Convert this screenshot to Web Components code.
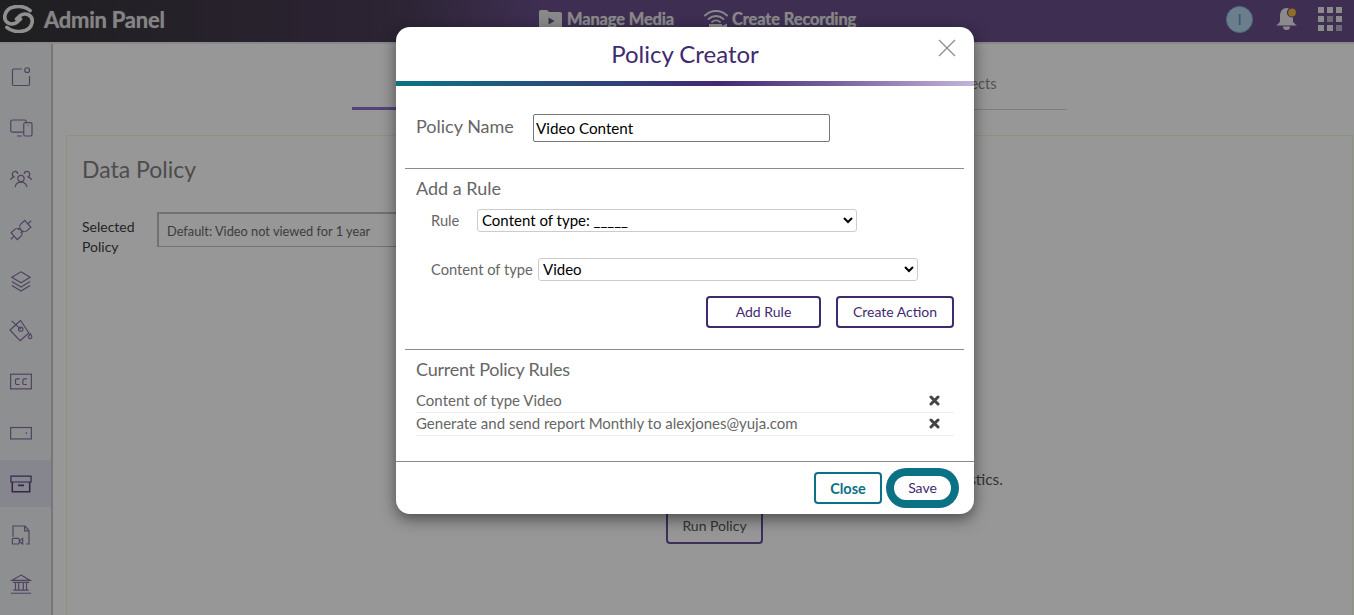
<!DOCTYPE html>
<html lang="en">
<head>
<meta charset="utf-8">
<title>Admin Panel - Policy Creator</title>
<style>
  html, body { margin: 0; height: 100%; overflow: hidden; font-family: Lato, "Liberation Sans", sans-serif; }
</style>
</head>
<body>
<admin-app></admin-app>

<script>
/* shared icons, all drawn on a 24 box */
const NAV_ICONS = [
  '<path d="M13 3.300H4a1.300 1.300 0 0 0-1.300 1.300v15.400a1.300 1.300 0 0 0 1.300 1.300h16a1.300 1.300 0 0 0 1.300-1.300V11"/><circle cx="18.700" cy="4.500" r="2.600"/>',
  '<path d="M14.500 16.400H2.500a1.700 1.700 0 0 1-1.700-1.700V5a1.700 1.700 0 0 1 1.700-1.700h13.500a1.700 1.700 0 0 1 1.700 1.700v1.200M7.600 20.700H13"/><rect x="15" y="6.200" width="9" height="14.500" rx="1.600"/><path d="M19 9h1"/>',
  '<circle cx="12" cy="11.500" r="3.400"/><path d="M5.500 21c.6-3.600 3.200-5.600 6.500-5.600s5.900 2 6.500 5.600"/><path d="M8.500 6.500A3 3 0 1 0 4.500 9.600M.6 13c.7-2 2.400-3.200 4.400-3.400M15.500 6.500a3 3 0 1 1 4 3.100M23.400 13c-.7-2-2.400-3.200-4.400-3.400"/>',
  '<g transform="rotate(-42 12 12)"><path d="M-3 12h5M27 12h-5"/><path d="M2 7h5a5 5 0 0 1 0 10H2zM22 7h-5a5 5 0 0 0 0 10h5z"/><path d="M12 9.800H9.500M12 14.200H9.500"/></g>',
  '<path d="M12 2l10 6-10 6L2 8z"/><path d="M2 12.500l10 6 10-6"/><path d="M2 17l10 6 10-6"/>',
  '<path d="M1.800 1l9.900 9"/><path d="M11.500 .5 20.700 14.200 10.900 22.600 0 10.900z" stroke-linejoin="round"/><circle cx="11.700" cy="10" r="2.300"/><path d="M22.100 15c1 1.500 1.700 2.500 1.700 3.500a1.800 1.800 0 0 1-3.600 0c0-1 .9-2 1.900-3.500z"/>',
  '<rect x=".7" y="3.500" width="22.600" height="16"/><path d="M10.500 8.500H7.500A1.500 1.500 0 0 0 6 10v3.200a1.500 1.500 0 0 0 1.500 1.500h3M18.500 8.500h-3A1.500 1.500 0 0 0 14 10v3.200a1.500 1.500 0 0 0 1.500 1.500h3"/>',
  '<rect x=".7" y="6" width="22.600" height="12.500"/><path d="M17.300 12.200h1.200" stroke-width="2"/>',
  '<path d="M1 3.500h22v6.300H1z"/><path d="M2.500 9.800v10.700h19V9.800M8.700 13.500h6.600" stroke-width="1.700"/>',
  '<path d="M3.300 14V2.200h13.100l4.300 5.100v14.500h-3M16 2.500v5h4.500"/><rect x="2.500" y="15.600" width="7.600" height="6.200" rx="1"/><path d="M10.100 18.700l3.700-3v6.100l-3.700-3"/>',
  '<path d="M12 1.200 22 7H2zM3 9.200h18M3.500 17.500h17M1 21h22"/><path d="M6 9.500v8M9.500 9.500v8M14.500 9.500v8M18 9.500v8"/>'
];

class TopBar extends HTMLElement {
  constructor() {
    super();
    this.attachShadow({ mode: 'open' });
    this.shadowRoot.innerHTML = `
      <style>
        :host {
          display: flex;
          align-items: center;
          box-sizing: content-box;
          height: 38px;
          padding-bottom: 4px;
          border-bottom: 2px solid #e4e4e4;
          background: linear-gradient(90deg, #343336 0, #4b3c57 400px, #674e89 540px, #674e89 100%);
          color: #eaeaea;
        }
        .brand { display: flex; align-items: center; gap: 10px; width: 538px; padding-left: 3px; box-sizing: border-box; }
        .brand b { font-size: 22px; font-weight: 700; letter-spacing: -.25px; color: #dcdcdc; text-shadow: 0 0 1px rgba(220,220,220,.7); }
        .link { display: flex; align-items: center; gap: 4px; font-size: 16.500px; font-weight: 700; letter-spacing: -.15px; margin-right: 30px; color: #e4e4e4; text-shadow: 0 0 1px rgba(228,228,228,.7); }
        .right { display: flex; align-items: center; margin-left: auto; padding-right: 12px; }
        .avatar {
          width: 25px; height: 25px; border-radius: 50%; background: #b4d0e8; border: 1.500px solid #7fb4dc;
          color: #5c92bd; font-size: 15px; text-align: center; line-height: 25px; margin-right: 22px;
        }
        .bell { margin-right: 20px; display: block; }
        .grid { display: grid; grid-template-columns: repeat(3, 6px); gap: 3px; }
        .grid i { width: 6px; height: 6px; background: #e8e8e8; }
        .grid i:nth-child(5), .grid i:nth-child(9) { background: #b7b0c2; }
      </style>
      <div class="brand">
        <svg width="31" height="28" viewBox="0 0 32 30" preserveAspectRatio="none" fill="none" stroke="#f0f0f0" stroke-width="3.800" stroke-linecap="round">
          <path d="M28 6C20-1 4 0 2 11c-1.500 8.500 7 11.500 12.500 7.500l3.500-3.500"/>
          <path d="M28 6C20-1 4 0 2 11c-1.500 8.500 7 11.500 12.500 7.500l3.500-3.500" transform="rotate(180 16 15)"/>
        </svg>
        <b>Admin Panel</b>
      </div>
      <div class="link">
        <svg width="25" height="20" viewBox="0 0 25 20"><path fill="#e4e4e4" d="M1 3a2 2 0 0 1 2-2h6l2 2h11a2 2 0 0 1 2 2v13a2 2 0 0 1-2 2H3a2 2 0 0 1-2-2z"/><path fill="#674e89" d="M10.500 8.500l6 3.500-6 3.500z"/></svg>
        <span>Manage Media</span>
      </div>
      <div class="link" style="margin-right:0">
        <svg width="24" height="23" viewBox="0 0 24 23" fill="none" stroke="#e4e4e4" stroke-width="1.800" stroke-linecap="round"><path d="M1 7.500C7 1.500 17 1.500 23 7.500M4.500 11C9 7 15 7 19.500 11M8 14c2.500-2 5.500-2 8 0"/><path fill="#e4e4e4" stroke="none" d="M5 16h13v7H5zM18 18l5-2.500V23l-5-2z"/></svg>
        <span>Create Recording</span>
      </div>
      <div class="right">
        <div class="avatar">I</div>
        <svg class="bell" width="23" height="24" viewBox="0 0 23 24"><path fill="#e8e4ec" d="M11.500 1c4.500 0 6.500 4 6.500 8v5c0 1.500 2 3 4 4.500H1c2-1.500 4-3 4-4.500V9c0-4 2-8 6.500-8z"/><path fill="#e8e4ec" d="M8 19.500h7a3.500 3.500 0 0 1-7 0z"/><circle cx="17" cy="5.500" r="4.500" fill="#f4b83a" stroke="#674e89" stroke-width="1.200"/></svg>
        <div class="grid"><i></i><i></i><i></i><i></i><i></i><i></i><i></i><i></i><i></i></div>
      </div>
    `;
  }
}

class SideNav extends HTMLElement {
  constructor() {
    super();
    this.attachShadow({ mode: 'open' });
    const active = Number(this.getAttribute('active') || 8);
    const items = NAV_ICONS.map((icon, i) => `
      <div class="item ${i === active ? 'active' : ''}">
        <svg width="22" height="22" viewBox="0 0 24 24" fill="none" stroke="currentColor" stroke-width="1.300">${icon}</svg>
      </div>`).join('');
    this.shadowRoot.innerHTML = `
      <style>
        :host {
          display: block;
          width: 51px;
          flex: none;
          padding-top: 8px;
          background: #edeef2;
          border-right: 2px solid #c6c6c6;
          color: #84709f;
        }
        .item { height: 50.800px; display: flex; align-items: center; padding-left: 10px; }
        .item.active { color: #57407f; position: relative; z-index: 0; }
        .item.active::before { content: ""; position: absolute; inset: 2px 0; background: #dfdfee; z-index: -1; }
        svg { display: block; overflow: visible; }
      </style>
      ${items}
    `;
  }
}

class PageTabs extends HTMLElement {
  constructor() {
    super();
    this.attachShadow({ mode: 'open' });
    this.shadowRoot.innerHTML = `
      <style>
        :host {
          display: flex;
          height: 65px;
          margin-left: 299px;
          width: 715px;
          border-bottom: 1px solid #d2d2d2;
          font-size: 14.500px;
          color: #888;
        }
        div { flex: 1; box-sizing: border-box; text-align: center; padding-top: 31px; }
        .on { border-bottom: 3px solid #8c70cb; height: 66px; }
        .last { padding-right: 6px; }
      </style>
      <div class="on">Data Policy</div><div></div><div class="last">Affected Objects</div>
    `;
  }
}

class UiButton extends HTMLElement {
  constructor() {
    super();
    this.attachShadow({ mode: 'open' });
    this.shadowRoot.innerHTML = `
      <style>
        :host {
          display: inline-flex;
          align-items: center;
          justify-content: center;
          box-sizing: border-box;
          height: 32px;
          padding-bottom: 2px;
          border: 2px solid #3f2a6f;
          border-radius: 4px;
          background: #fff;
          color: #3f2a6f;
          font-size: 14px;
        }
        :host([tone="teal"]) { padding-bottom: 0; border-color: #0b7285; color: #0b7285; font-weight: 700; font-size: 14.500px; }
        :host([tone="ghost"]) { padding-bottom: 4px; background: transparent; border-color: #674e9a; color: #555; }
        :host([tone="save"]) {
          height: 24px;
          border: 0;
          border-radius: 12px;
          box-shadow: 0 0 0 8px #0b7285;
        }
      </style>
      <slot></slot>
    `;
  }
}

class DataPolicyPage extends HTMLElement {
  constructor() {
    super();
    this.attachShadow({ mode: 'open' });
    this.shadowRoot.innerHTML = `
      <style>
        :host {
          display: block;
          flex: 1;
          min-width: 0;
          background: #fcfcfc;
          color: #333;
          font-size: 14px;
        }
        .panel {
          margin: 25px 1px 0 13px;
          padding: 19px 15px 0;
          border: 1px solid #e9f5d2;
          height: 480px;
        }
        h1 { margin: 0; font-size: 23px; line-height: 28px; font-weight: 400; color: #808080; }
        .row { display: flex; gap: 21px; margin-top: 29px; }
        label { width: 54px; line-height: 20px; padding-top: 5px; color: #3d3d3d; }
        .box {
          box-sizing: border-box; width: 500px; height: 35px; padding-left: 8px; line-height: 34px;
          border: 1px solid #bdbdbd; border-width: 2px 1px 1px 2px; font-size: 12.800px; color: #666;
        }
        .run { display: flex; flex-direction: column; align-items: center; margin-top: 212px; width: 1265px; }
        p { margin: 0 0 21px; white-space: nowrap; font-size: 15.350px; line-height: 20px; color: #555; }
        ui-button { width: 97px; height: 34px; font-size: 14px; }
      </style>
      <page-tabs></page-tabs>
      <section class="panel">
        <h1>Data Policy</h1>
        <div class="row"><label>Selected Policy</label><div class="box">Default: Video not viewed for 1 year</div></div>
        <div class="run">
          <p>Run the selected policy to generate a report of affected content and view its statistics.</p>
          <ui-button tone="ghost">Run Policy</ui-button>
        </div>
      </section>
    `;
  }
}

class RuleRow extends HTMLElement {
  constructor() {
    super();
    this.attachShadow({ mode: 'open' });
    this.shadowRoot.innerHTML = `
      <style>
        :host {
          display: flex;
          align-items: center;
          justify-content: space-between;
          box-sizing: border-box;
          height: 23px;
          padding-bottom: 2px;
          border-bottom: 1px solid #eee;
          font-size: 15px;
          color: #666;
        }
        svg { margin: 1px 14px 0 0; display: block; }
      </style>
      <slot></slot>
      <svg width="11" height="11" viewBox="0 0 11 11" stroke="#444" stroke-width="3" stroke-linecap="round"><path d="M2 2l7 7M9 2l-7 7"/></svg>
    `;
  }
}

class PolicyCreator extends HTMLElement {
  constructor() {
    super();
    this.attachShadow({ mode: 'open' });
    this.shadowRoot.innerHTML = `
      <style>
        :host {
          position: absolute;
          left: 396px;
          top: 27px;
          width: 578px;
          height: 487px;
          display: flex;
          flex-direction: column;
          background: #fff;
          border-radius: 14px;
          box-shadow: 0 5px 15px rgba(0,0,0,.5);
          color: #666;
        }
        header { height: 54px; display: flex; align-items: center; justify-content: center; position: relative; }
        h2 { margin: -2px 0 0; font-size: 24px; font-weight: 400; color: #3f2a6f; }
        .x { position: absolute; right: 18px; top: 12px; display: block; }
        .bar { height: 5px; background: linear-gradient(90deg, #0b7285 0, #432874 56%, #7a5f9f 76%, #c4b5d8 100%); }
        .name { display: flex; align-items: flex-start; box-sizing: border-box; height: 82px; padding: 28px 0 0 20px; }
        .name label { width: 117px; margin-top: 1px; font-size: 18px; line-height: 22px; }
        input {
          box-sizing: border-box; width: 297px; height: 28px; padding: 0 2px 1px; margin: 0;
          border: 1px solid #767676; border-radius: 2px; font: 15.200px Lato, "Liberation Sans", sans-serif; color: #000;
        }
        hr { border: 0; border-top: 1px solid #8c8c8c; margin: 0 10px 0 9px; height: 0; }
        h3 { margin: 0; font-size: 18px; font-weight: 400; line-height: 22px; padding: 8px 0 0 20px; }
        .rules h3 { letter-spacing: -.25px; }
        .field { display: flex; align-items: center; padding-left: 35px; height: 23px; font-size: 14.700px; }
        select {
          box-sizing: border-box; width: 380px; height: 23px; margin: 0; padding: 0 0 2px;
          border: 1px solid #ccc; border-radius: 3px; background: #fff; color: #000;
          font: 15px Lato, "Liberation Sans", sans-serif;
        }
        .field span { flex: none; padding-bottom: 2px; }
        .field.first { margin-top: 10px; }
        .field.first span { width: 46px; }
        .field.second { margin-top: 26px; }
        .field.second span { width: 107px; }
        .actions { display: flex; justify-content: flex-end; gap: 15px; padding: 15px 20px 21px 0; }
        .actions ui-button:first-child { width: 115px; }
        .actions ui-button:last-child { width: 118px; }
        .list { margin: 10px 20px 25px 20px; }
        footer { flex: 1; display: flex; align-items: center; border-top: 1px solid #8c8c8c; padding-left: 418px; }
        footer ui-button:first-child { width: 68px; }
        footer ui-button:last-child { width: 57px; margin-left: 12px; }
      </style>
      <header>
        <h2>Policy Creator</h2>
        <svg class="x" width="18" height="18" viewBox="0 0 18 18" stroke="#8c8c8c" stroke-width="1.200"><path d="M1 1l16 16M17 1L1 17"/></svg>
      </header>
      <div class="bar"></div>
      <div class="name"><label>Policy Name</label><input value="Video Content"></div>
      <hr>
      <div class="add">
        <h3>Add a Rule</h3>
        <div class="field first"><span>Rule</span><select><option>Content of type: _____</option></select></div>
        <div class="field second"><span>Content of type</span><select><option>Video</option></select></div>
        <div class="actions"><ui-button>Add Rule</ui-button><ui-button>Create Action</ui-button></div>
      </div>
      <hr>
      <div class="rules">
        <h3>Current Policy Rules</h3>
        <div class="list">
          <rule-row>Content of type Video</rule-row>
          <rule-row>Generate and send report Monthly to alexjones@yuja.com</rule-row>
        </div>
      </div>
      <footer><ui-button tone="teal">Close</ui-button><ui-button tone="save">Save</ui-button></footer>
    `;
  }
}

class AdminApp extends HTMLElement {
  constructor() {
    super();
    this.attachShadow({ mode: 'open' });
    this.shadowRoot.innerHTML = `
      <style>
        :host { display: flex; flex-direction: column; height: 615px; width: 1354px; overflow: hidden; position: relative; }
        .body { flex: 1; display: flex; min-height: 0; }
        .scrim { position: absolute; inset: 0; background: rgba(0,0,0,.4); }
      </style>
      <top-bar></top-bar>
      <div class="body">
        <side-nav active="8"></side-nav>
        <data-policy-page></data-policy-page>
      </div>
      <div class="scrim"></div>
      <policy-creator></policy-creator>
    `;
  }
}

customElements.define('top-bar', TopBar);
customElements.define('side-nav', SideNav);
customElements.define('page-tabs', PageTabs);
customElements.define('ui-button', UiButton);
customElements.define('rule-row', RuleRow);
customElements.define('data-policy-page', DataPolicyPage);
customElements.define('policy-creator', PolicyCreator);
customElements.define('admin-app', AdminApp);
</script>
</body>
</html>
